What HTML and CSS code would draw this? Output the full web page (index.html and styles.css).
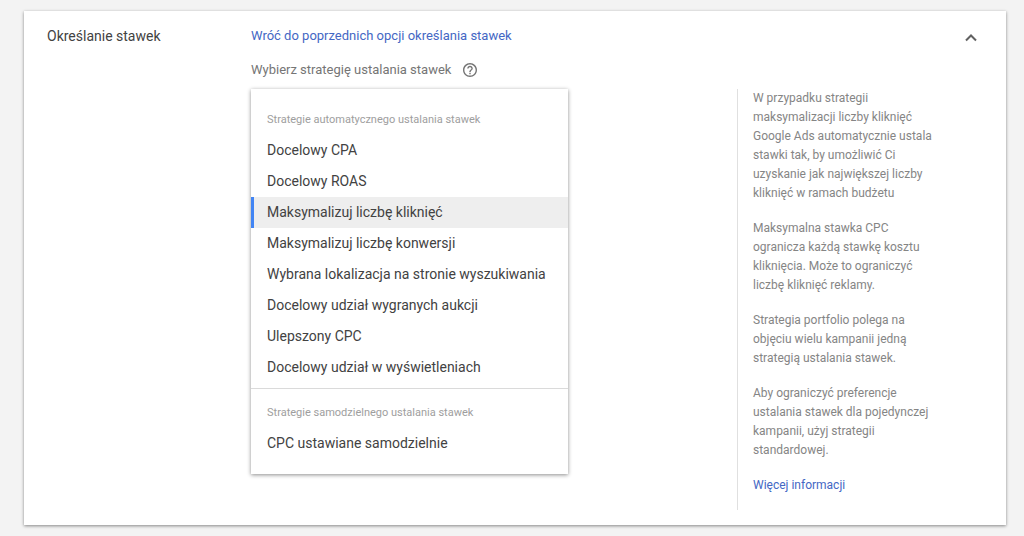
FILE: index.html
```html
<!DOCTYPE html>
<html lang="pl">
<head>
    <meta charset="UTF-8">
    <meta name="viewport" content="width=device-width, initial-scale=1.0">
    <title>Określanie stawek</title>
    <link rel="stylesheet" href="styles.css">
</head>
<body>
    <section class="card">
        <h2 class="card-title">Określanie stawek</h2>

        <div class="card-content">
            <div class="top-row">
                <a class="back-link" href="#">Wróć do poprzednich opcji określania stawek</a>
                <button class="icon-button" type="button" aria-label="Zwiń">
                    <svg width="24" height="24" viewBox="0 0 24 24">
                        <path d="M7 16.5 12 11.5l5 5" fill="none" stroke="#616161" stroke-width="2"/>
                    </svg>
                </button>
            </div>

            <div class="label-row">
                <span id="strategy-label">Wybierz strategię ustalania stawek</span>
                <button class="icon-button" type="button" aria-label="Pomoc">
                    <svg width="14" height="14" viewBox="2 2 20 20">
                        <path fill="#757575" d="M11 18h2v-2h-2v2zm1-16C6.48 2 2 6.48 2 12s4.48 10 10 10 10-4.48 10-10S17.52 2 12 2zm0 18c-4.41 0-8-3.59-8-8s3.59-8 8-8 8 3.59 8 8-3.59 8-8 8zm0-14c-2.21 0-4 1.79-4 4h2c0-1.1.9-2 2-2s2 .9 2 2c0 2-3 1.75-3 5h2c0-2.25 3-2.5 3-5 0-2.21-1.79-4-4-4z"/>
                    </svg>
                </button>
            </div>

            <div class="columns">
                <div class="menu" role="listbox" aria-labelledby="strategy-label">
                    <div class="menu-group">
                        <div class="group-name">Strategie automatycznego ustalania stawek</div>
                        <button class="option" type="button" role="option">Docelowy CPA</button>
                        <button class="option" type="button" role="option">Docelowy ROAS</button>
                        <button class="option selected" type="button" role="option" aria-selected="true">Maksymalizuj liczbę kliknięć</button>
                        <button class="option" type="button" role="option">Maksymalizuj liczbę konwersji</button>
                        <button class="option" type="button" role="option">Wybrana lokalizacja na stronie wyszukiwania</button>
                        <button class="option" type="button" role="option">Docelowy udział wygranych aukcji</button>
                        <button class="option" type="button" role="option">Ulepszony CPC</button>
                        <button class="option" type="button" role="option">Docelowy udział w wyświetleniach</button>
                    </div>
                    <div class="menu-group">
                        <div class="group-name">Strategie samodzielnego ustalania stawek</div>
                        <button class="option" type="button" role="option">CPC ustawiane samodzielnie</button>
                    </div>
                </div>

                <aside class="help">
                    <p>W przypadku strategii maksymalizacji liczby kliknięć Google Ads automatycznie ustala stawki tak, by umożliwić Ci uzyskanie jak największej liczby kliknięć w ramach budżetu</p>
                    <p>Maksymalna stawka CPC ogranicza każdą stawkę kosztu kliknięcia. Może to ograniczyć liczbę kliknięć reklamy.</p>
                    <p>Strategia portfolio polega na objęciu wielu kampanii jedną strategią ustalania stawek.</p>
                    <p>Aby ograniczyć preferencje ustalania stawek dla pojedynczej kampanii, użyj strategii standardowej.</p>
                    <p><a href="#">Więcej informacji</a></p>
                </aside>
            </div>
        </div>
    </section>
</body>
</html>
```

FILE: styles.css
```css
body {
    margin: 0;
    padding: 11px 18px 11px 24px;
    background-color: #f3f3f3;
    font-family: Roboto, 'Liberation Sans', sans-serif;
    font-size: 13px;
    color: #424242;
}

a {
    color: #4467c4;
    text-decoration: none;
}

button {
    font-family: inherit;
    border: none;
    background: none;
    cursor: pointer;
}

.card {
    display: flex;
    padding: 13px 23px 15px;
    background-color: #fff;
    box-shadow: 0 1px 3px rgba(0, 0, 0, 0.45);
}

.card-title {
    flex: 0 0 204px;
    margin: 0;
    font-size: 14px;
    font-weight: 400;
    line-height: 24px;
}

.card-content {
    flex: 1;
}

.top-row {
    display: flex;
    justify-content: space-between;
    line-height: 24px;
}

.icon-button {
    display: flex;
    padding: 0;
}

.label-row {
    display: flex;
    align-items: center;
    gap: 12px;
    margin: 10px 0 7px;
    line-height: 24px;
    color: #757575;
}

.columns {
    display: flex;
    justify-content: space-between;
    align-items: flex-start;
}

.menu {
    width: 317px;
    box-shadow: 0 1px 4px rgba(0, 0, 0, 0.45);
}

.menu-group {
    padding: 15px 0 5px;
}

.menu-group + .menu-group {
    padding: 8px 0 15px;
    border-top: 1px solid #dadada;
}

.group-name {
    padding: 0 16px;
    font-size: 11px;
    line-height: 31px;
    color: #9e9e9e;
}

.option {
    display: block;
    width: 100%;
    padding: 0 13px;
    border-left: 3px solid transparent;
    font-size: 14px;
    line-height: 31px;
    text-align: left;
    color: #424242;
}

.option.selected {
    border-left-color: #4285f4;
    background-color: #eee;
}

.help {
    width: 190px;
    padding: 0 40px 15px 15px;
    border-left: 1px solid #e0e0e0;
    font-size: 12px;
    line-height: 19px;
    color: #858585;
}

.help p {
    margin: 0 0 16px;
}

.help p:last-child {
    margin: 0;
}
```
